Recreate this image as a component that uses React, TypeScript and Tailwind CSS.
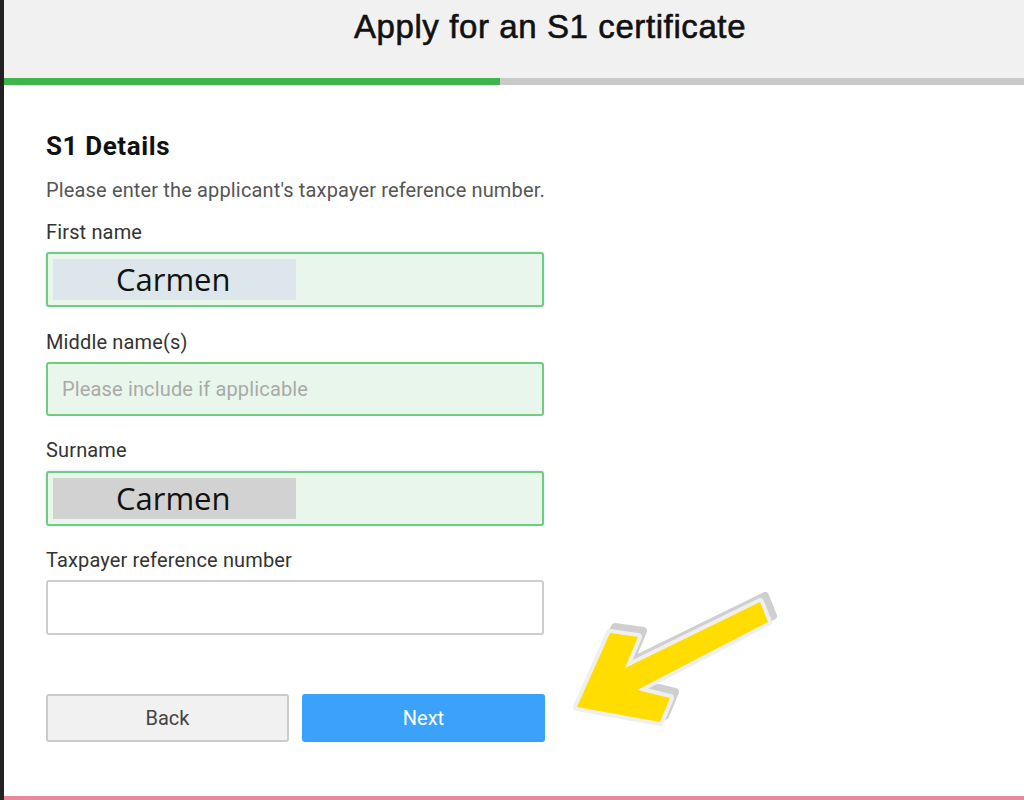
import React from "react";

const label = "text-[20px] leading-[24px] tracking-[0.15px] text-[#333] font-['Roboto',sans-serif]";

function FilledInput({ value, chip }: { value: string; chip: string }) {
  return (
    <div className="flex h-[55px] w-[498px] items-center rounded-[3px] border-2 border-[#72cc7f] bg-[#e9f6eb] px-[5px] shadow-[0_0_3px_rgba(110,170,230,0.35)]">
      <div className={`flex h-[41px] w-[243px] items-center pl-[63px] ${chip}`}>
        <span className="font-['Open_Sans',sans-serif] text-[31px] text-[#111]">{value}</span>
      </div>
    </div>
  );
}

function Arrow() {
  const pts = "638,637 625,668 760,602 768,622 637,690 670,698 660,722 577,707 610,633";
  return (
    <svg width="240" height="170" viewBox="560 580 240 170" className="absolute left-[560px] top-[580px]" aria-hidden>
      <polygon points={pts} transform="translate(5,-6)" fill="#cfcfcf" stroke="#cfcfcf" strokeWidth="8" strokeLinejoin="round" />
      <polygon points={pts} fill="#ffdd00" stroke="#efefef" strokeWidth="8" strokeLinejoin="round" />
      <polygon points={pts} fill="#ffdd00" />
    </svg>
  );
}

export default function App() {
  return (
    <div className="relative flex h-[800px] w-[1024px] overflow-hidden bg-white">
      <div className="w-[4px] shrink-0 bg-[#222]" />
      <div className="flex flex-1 flex-col">
        <div className="flex h-[78px] items-center justify-center bg-[#f1f1f1] pb-[24px] pl-[72px]">
          <h1 className="font-['Liberation_Sans',Arial,sans-serif] text-[33px] leading-[40px] tracking-[0.6px] text-[#111] [-webkit-text-stroke:0.6px_#111]">
            Apply for an S1 certificate
          </h1>
        </div>
        <div className="flex h-[7px] bg-[#cacaca]">
          <div className="w-[496px] bg-[#3db54b]" />
        </div>
        <div className="flex flex-1 flex-col pl-[42px] pt-[46px]">
          <h2 className="font-['Roboto',sans-serif] text-[26px] font-bold leading-[30px] tracking-[0.6px] text-[#111]">S1 Details</h2>
          <p className="mt-[17px] font-['Roboto',sans-serif] text-[20px] leading-[24px] tracking-[0.15px] text-[#555]">
            Please enter the applicant's taxpayer reference number.
          </p>
          <div className={`mt-[18px] ${label}`}>First name</div>
          <div className="mt-[8px]">
            <FilledInput value="Carmen" chip="bg-[#dde6ea]" />
          </div>
          <div className={`mt-[23px] ${label}`}>Middle name(s)</div>
          <div className="mt-[8px] flex h-[54px] w-[498px] items-center rounded-[3px] border-2 border-[#72cc7f] bg-[#e9f6eb] px-[14px]">
            <span className="font-['Roboto',sans-serif] text-[20px] tracking-[0.15px] text-[#a9a9a9]">Please include if applicable</span>
          </div>
          <div className={`mt-[22px] ${label}`}>Surname</div>
          <div className="mt-[9px]">
            <FilledInput value="Carmen" chip="bg-[#d2d2d2]" />
          </div>
          <div className={`mt-[22px] ${label}`}>Taxpayer reference number</div>
          <div className="mt-[8px] h-[55px] w-[498px] rounded-[3px] border-2 border-[#cdcdcd] bg-white" />
          <div className="mt-[59px] flex gap-[13px]">
            <button className="h-[48px] w-[243px] rounded-[3px] border-2 border-[#cbcbcb] bg-[#f1f1f1] font-['Roboto',sans-serif] text-[20px] text-[#444]">
              Back
            </button>
            <button className="h-[48px] w-[243px] rounded-[3px] bg-[#3aa2fb] font-['Roboto',sans-serif] text-[20px] text-white">
              Next
            </button>
          </div>
        </div>
        <div className="h-[4px] bg-[#e8899a]" />
      </div>
      <Arrow />
    </div>
  );
}
